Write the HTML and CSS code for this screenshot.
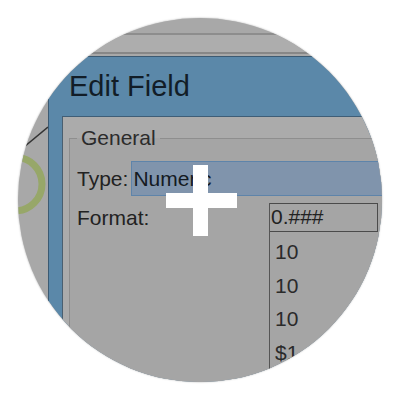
FILE: index.html
```html
<!DOCTYPE html>
<html lang="en">
<head>
    <meta charset="UTF-8">
    <meta name="viewport" content="width=device-width, initial-scale=1.0">
    <title>Edit Field</title>
    <link rel="stylesheet" href="styles.css">
</head>
<body>
    <div class="lens">
        <div class="menubar"></div>
        <div class="toolbar"></div>

        <div class="workspace">
            <div class="desk">
                <svg width="30" height="320" viewBox="18 54 30 320">
                    <circle cx="15" cy="184" r="27" fill="none" stroke="#97a769" stroke-width="7"/>
                    <line x1="24" y1="147" x2="48" y2="127" stroke="#333" stroke-width="1.6"/>
                </svg>
            </div>

            <div class="dialog">
                <h1 class="dialog-title">Edit Field</h1>
                <div class="dialog-body">
                    <fieldset class="group">
                        <legend>General</legend>
                        <div class="row type-row">
                            <span class="label">Type:</span>
                            <div class="field">Numeric</div>
                        </div>
                        <div class="row format-row">
                            <span class="label format-label">Format:</span>
                            <div class="format-list">
                                <div class="combo">0.###</div>
                                <ul class="options">
                                    <li>10</li>
                                    <li>10</li>
                                    <li>10</li>
                                    <li>$1</li>
                                </ul>
                            </div>
                        </div>
                    </fieldset>
                </div>
            </div>
        </div>

        <div class="cross"></div>
    </div>
</body>
</html>
```

FILE: styles.css
```css
body {
    margin: 0;
    background: #fff;
    font-family: "Liberation Sans", Arial, sans-serif;
}
.lens {
    position: relative;
    width: 364px;
    height: 364px;
    margin: 18px;
    border-radius: 50%;
    overflow: hidden;
    background: #a8a8a8;
    box-shadow: 0 0 2px rgba(0, 0, 0, 0.35);
}
.menubar {
    height: 15px;
    border-bottom: 2px solid #8d8d8d;
}
.toolbar {
    height: 17px;
    background: #adadad;
    border-bottom: 2px solid #878787;
}
.workspace {
    display: flex;
}
.desk {
    flex: none;
    width: 30px;
}
.desk svg {
    display: block;
}
.dialog {
    flex: none;
    width: 420px;
    margin-top: 2px;
    border: 1px solid #3c5a72;
    background: #5b88a9;
}
.dialog-title {
    margin: 0;
    padding: 13px 0 13px 20px;
    font-size: 29px;
    font-weight: normal;
    line-height: 33px;
    color: #121d27;
}
.dialog-body {
    margin-left: 13px;
    height: 400px;
    border-top: 1px solid #3f5e77;
    border-left: 1px solid #4a5f70;
    background: #ababab;
}
.group {
    min-height: 320px;
    margin: 9px 0 0 6px;
    padding: 0 0 0 7px;
    border: 1px solid #8e8e8e;
    border-right: none;
    min-width: 0;
    background: #a5a5a5;
}
.group legend {
    padding: 0 4px;
    font-size: 21px;
    line-height: 24px;
    color: #2b2b2b;
}
.row {
    display: flex;
    font-size: 21px;
    color: #222;
}
.type-row {
    align-items: baseline;
    margin-top: 11px;
}
.label {
    line-height: 24px;
}
.field {
    flex: 1;
    height: 33px;
    margin-left: 3px;
    padding-left: 1px;
    border: 1px solid #5e84aa;
    background: #8094ac;
    line-height: 33px;
    color: #141a22;
}
.format-row {
    margin-top: 7px;
    align-items: flex-start;
}
.format-label {
    width: 192px;
    padding-top: 3px;
}
.format-list {
    width: 108px;
    border-left: 1px solid #555;
}
.combo {
    height: 25px;
    padding: 0 0 2px 1px;
    border: 1px solid #4b4b4b;
    border-left: none;
    line-height: 25px;
    color: #222;
}
.options {
    list-style: none;
    margin: 0;
    padding: 3px 0 0 5px;
}
.options li {
    line-height: 33.5px;
    color: #2a2a2a;
}
.cross::before,
.cross::after {
    content: "";
    position: absolute;
    background: #fff;
}
.cross::before {
    left: 175px;
    top: 147px;
    width: 15px;
    height: 71px;
}
.cross::after {
    left: 148px;
    top: 175px;
    width: 71px;
    height: 15px;
}
```
